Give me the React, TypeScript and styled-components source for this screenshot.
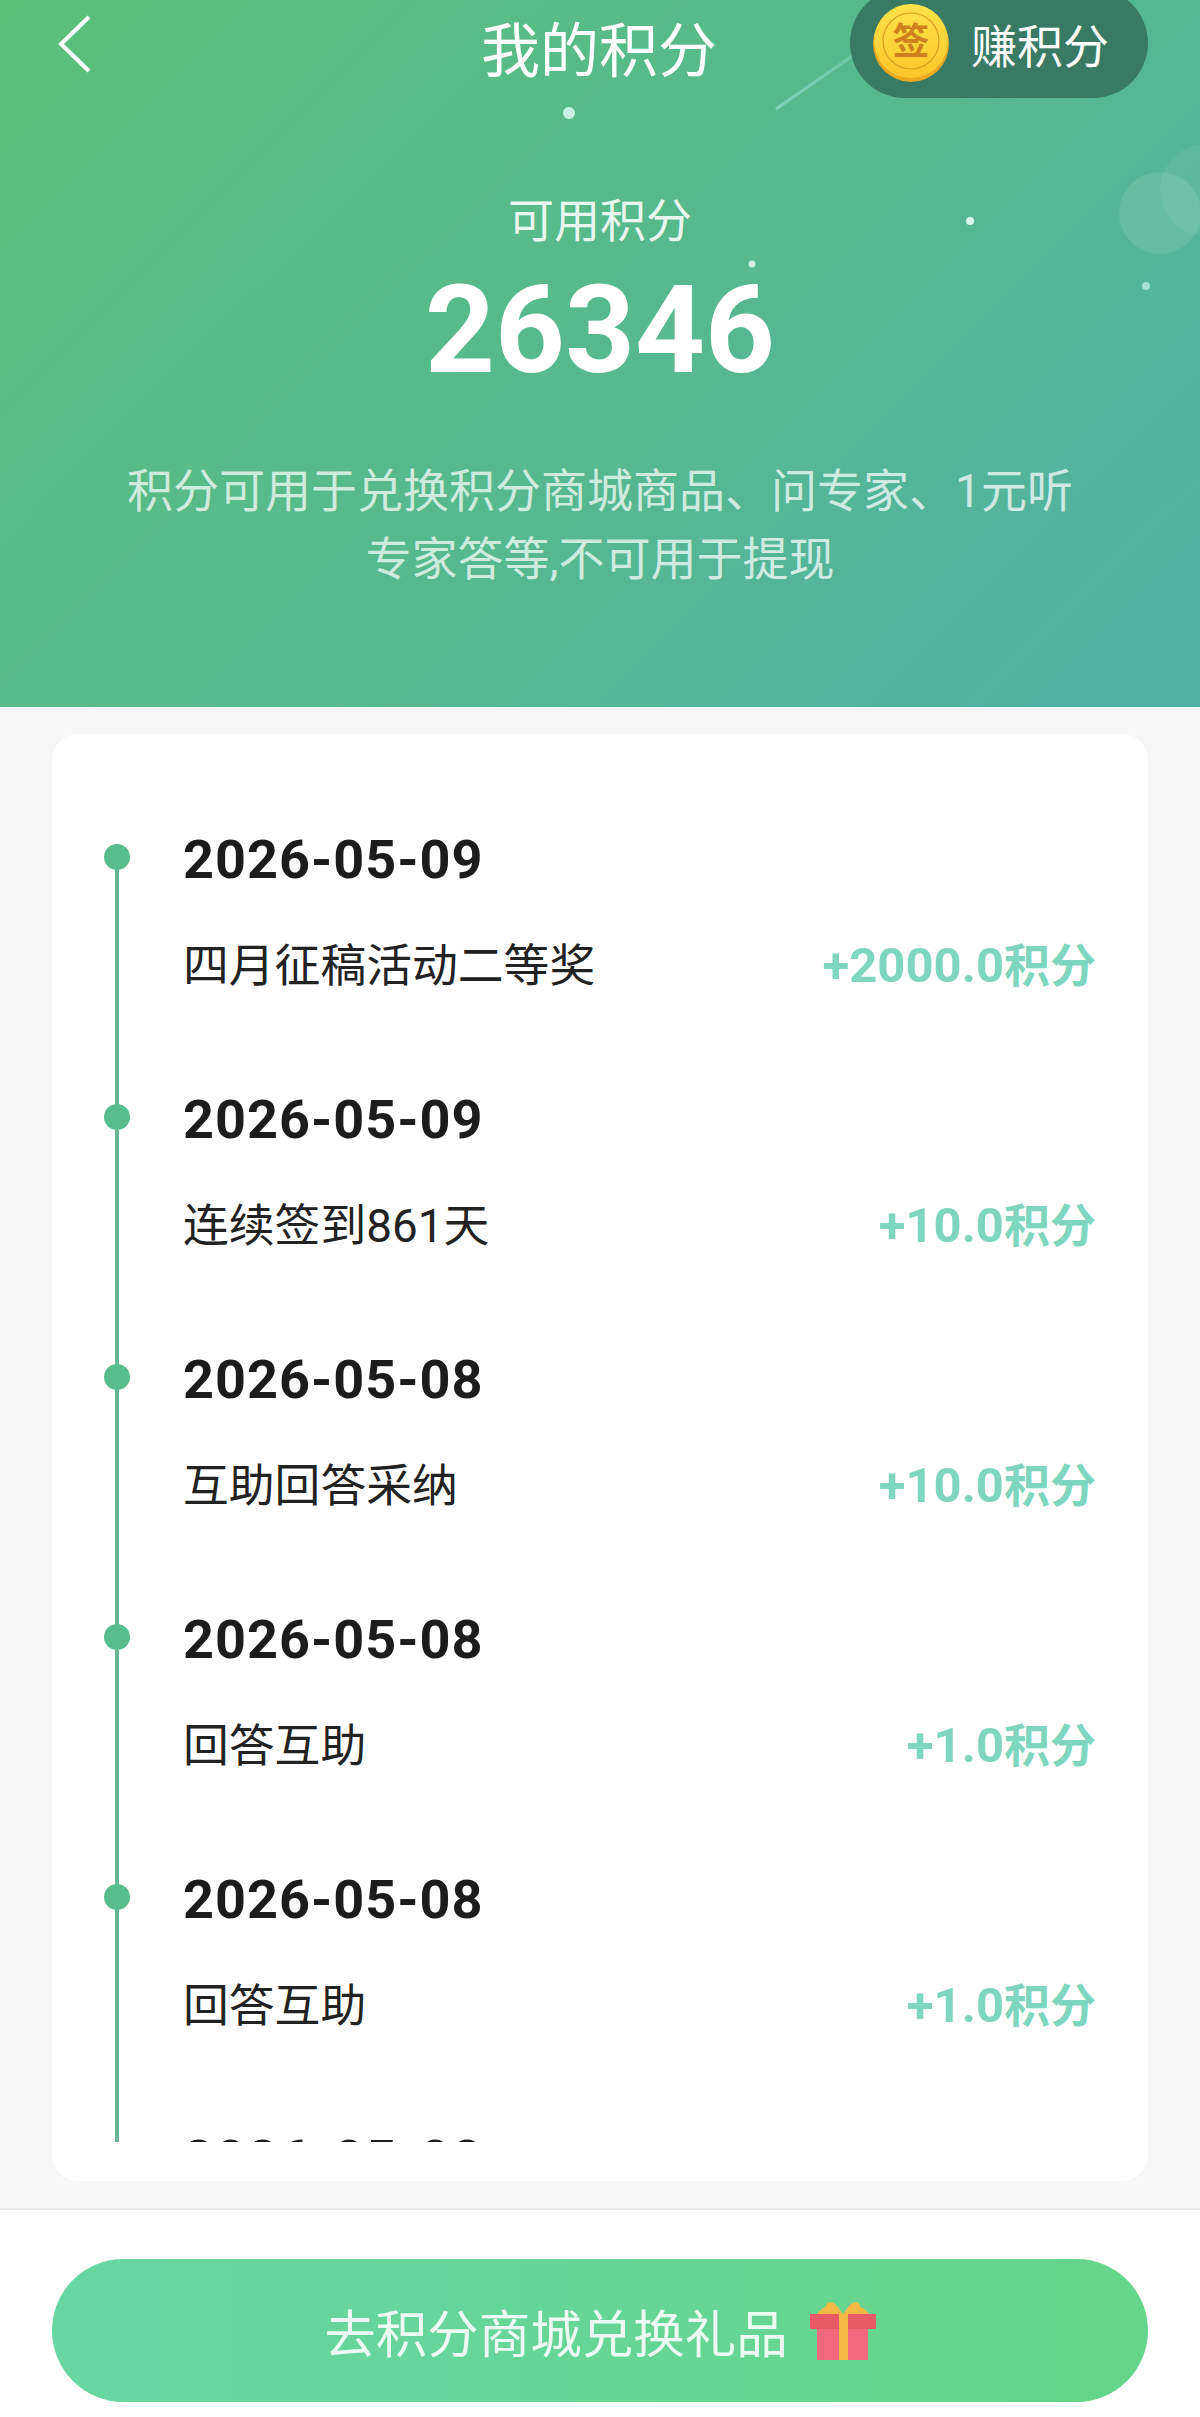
import { createGlobalStyle, styled } from "styled-components"

const GlobalStyle = createGlobalStyle`
    html, body {
        margin: 0;
        padding: 0;
        background: #f7f7f7;
    }

    body {
        font-family: Roboto, "Noto Sans CJK SC", sans-serif;
    }
`

const SPage = styled.div`
    display: flex;
    flex-direction: column;
    width: 1200px;
    height: 2417px;
    overflow: hidden;
`

const SHeader = styled.header`
    position: relative;
    flex: none;
    height: 707px;
    overflow: hidden;
    color: white;
    text-align: center;
    background: linear-gradient(135deg, #5bc07a 0%, #55b892 58%, #51b1a3 100%);
`

const SSky = styled.svg`
    position: absolute;
    top: 0;
    left: 0;
`

const SNav = styled.div`
    position: relative;
    display: grid;
    grid-template-columns: 1fr auto 1fr;
    align-items: start;
    padding: 0 52px;
`

const SBack = styled.svg`
    display: block;
    margin: 15px 0 0 6px;
`

const STitle = styled.h1`
    margin: 0 2px 0 0;
    font-size: 59px;
    font-weight: 400;
    line-height: 104px;
`

const SEarn = styled.div`
    display: flex;
    align-items: center;
    justify-self: end;
    gap: 21px;
    box-sizing: border-box;
    width: 298px;
    height: 110px;
    margin-top: -12px;
    padding-left: 22px;
    border-radius: 55px;
    background: #397a65;
    font-size: 46px;
`

const SSummary = styled.div`
    position: relative;
    padding-top: 89px;
`

const SLabel = styled.div`
    font-size: 46px;
    line-height: 56px;
    color: rgba(255, 255, 255, 0.9);
`

const STotal = styled.div`
    margin-top: 10px;
    font-size: 122px;
    font-weight: 700;
    line-height: 144px;
`

const SNote = styled.p`
    margin: 54px 0 0;
    font-size: 46px;
    line-height: 68px;
    color: rgba(255, 255, 255, 0.72);
`

const SMain = styled.main`
    flex: 1;
    padding: 27px 52px;
    min-height: 0;
`

const SCard = styled.section`
    box-sizing: border-box;
    height: 1447px;
    padding-bottom: 39px;
    border-radius: 26px;
    background: white;
`

const STimeline = styled.ol`
    box-sizing: border-box;
    height: 1408px;
    margin: 0;
    padding: 110px 52px 0;
    overflow: hidden;
    list-style: none;
`

const SItem = styled.li`
    display: grid;
    grid-template-columns: 26px 1fr;
    column-gap: 53px;
    height: 260px;
`

const SRail = styled.div`
    display: flex;
    flex-direction: column;
    align-items: center;
`

const SDot = styled.span`
    flex: none;
    width: 26px;
    height: 26px;
    border-radius: 50%;
    background: #58bd8c;
`

const SLine = styled.span`
    flex: 1;
    width: 3.5px;
    background: #66b694;
`

const SDate = styled.div`
    height: 30px;
    font-size: 54px;
    font-weight: 700;
    line-height: 32px;
    letter-spacing: 1px;
    color: #1c1c1c;
`

const SRow = styled.div`
    display: flex;
    align-items: center;
    justify-content: space-between;
    height: 60px;
    margin-top: 58px;
`

const SReason = styled.span`
    font-size: 45.8px;
    color: #222222;
`

const SAmount = styled.span`
    font-size: 49px;
    font-weight: 700;
    color: #7dd6bd;
`

const SUnit = styled.span`
    font-size: 46px;
`

const SFooter = styled.footer`
    flex: none;
    box-sizing: border-box;
    height: 209px;
    padding: 49px 52px 0;
    border-top: 2px solid #e8e8e8;
    background: white;
`

const SButton = styled.button`
    display: flex;
    align-items: center;
    justify-content: center;
    gap: 22px;
    width: 100%;
    height: 143px;
    padding: 0;
    border: none;
    border-radius: 72px;
    background: linear-gradient(90deg, #67d6a2 0%, #64d58a 100%);
    color: rgba(255, 255, 255, 0.88);
    font-family: inherit;
    font-size: 51.5px;
`

const records = [
    { date: "2026-05-09", reason: "四月征稿活动二等奖", amount: "+2000.0" },
    { date: "2026-05-09", reason: "连续签到861天", amount: "+10.0" },
    { date: "2026-05-08", reason: "互助回答采纳", amount: "+10.0" },
    { date: "2026-05-08", reason: "回答互助", amount: "+1.0" },
    { date: "2026-05-08", reason: "回答互助", amount: "+1.0" },
    { date: "2026-05-08", reason: "回答互助", amount: "+1.0" },
]

const Sky = () => (
    <SSky width="1200" height="707" viewBox="0 0 1200 707">
        <defs>
            <linearGradient id="meteor" x1="0" y1="1" x2="1" y2="0">
                <stop offset="0" stopColor="#8fdcd0" stopOpacity="0.7" />
                <stop offset="1" stopColor="#8fdcd0" stopOpacity="0.1" />
            </linearGradient>
        </defs>
        <path d="M776 109 L950 -12" stroke="url(#meteor)" strokeWidth="3" fill="none" />
        <circle cx="1160" cy="213" r="41" fill="#ffffff" opacity="0.1" />
        <circle cx="1206" cy="190" r="46" fill="#ffffff" opacity="0.06" />
        <circle cx="569" cy="113" r="6" fill="#c9f1e6" />
        <circle cx="970" cy="221" r="4" fill="#d8f6ee" />
        <circle cx="752" cy="264" r="3.5" fill="#c9f1e6" />
        <circle cx="1146" cy="286" r="4" fill="#a5e2d4" />
    </SSky>
)

const BackIcon = () => (
    <SBack width="34" height="58" viewBox="0 0 34 58">
        <path d="M31 2 L3 29 L31 56" stroke="#ffffff" strokeWidth="4" fill="none" />
    </SBack>
)

const CoinIcon = () => (
    <svg width="78" height="78" viewBox="0 0 78 78">
        <defs>
            <linearGradient id="coin" x1="0" y1="0" x2="0" y2="1">
                <stop offset="0" stopColor="#ffe24a" />
                <stop offset="1" stopColor="#fcc62b" />
            </linearGradient>
        </defs>
        <circle cx="39" cy="40" r="38" fill="#eca81f" />
        <circle cx="39" cy="37" r="37" fill="url(#coin)" />
        <circle cx="39" cy="37" r="28" fill="none" stroke="#dc9d24" strokeWidth="1.2" />
        <text x="39" y="51" fontSize="37" fontWeight="700" fill="#cf801c" textAnchor="middle" fontFamily="Noto Sans CJK SC, sans-serif">签</text>
    </svg>
)

const GiftIcon = () => (
    <svg width="66" height="58" viewBox="0 0 66 58">
        <path d="M33 13 C30 7 25 0 20 0 C17 0 16 3 16 5 C12 6 9 9 6 13 Z" fill="#f5b843" />
        <path d="M33 13 C36 7 41 0 46 0 C49 0 50 3 50 5 C54 6 57 9 60 13 Z" fill="#f5b843" />
        <rect x="7" y="27" width="51" height="31" fill="#f2697e" />
        <rect x="0" y="12" width="66" height="15" fill="#e85a65" />
        <rect x="29" y="11" width="9" height="47" fill="#f5b843" />
    </svg>
)

const App = () => (
    <>
        <GlobalStyle />
        <SPage>
            <SHeader>
                <Sky />
                <SNav>
                    <BackIcon />
                    <STitle>我的积分</STitle>
                    <SEarn>
                        <CoinIcon />
                        赚积分
                    </SEarn>
                </SNav>
                <SSummary>
                    <SLabel>可用积分</SLabel>
                    <STotal>26346</STotal>
                    <SNote>
                        积分可用于兑换积分商城商品、问专家、1元听
                        <br />
                        专家答等,不可用于提现
                    </SNote>
                </SSummary>
            </SHeader>
            <SMain>
                <SCard>
                    <STimeline>
                        {records.map((record, index) => (
                            <SItem key={index}>
                                <SRail>
                                    <SDot />
                                    <SLine />
                                </SRail>
                                <div>
                                    <SDate>{record.date}</SDate>
                                    <SRow>
                                        <SReason>{record.reason}</SReason>
                                        <SAmount>
                                            {record.amount}
                                            <SUnit>积分</SUnit>
                                        </SAmount>
                                    </SRow>
                                </div>
                            </SItem>
                        ))}
                    </STimeline>
                </SCard>
            </SMain>
            <SFooter>
                <SButton>
                    去积分商城兑换礼品
                    <GiftIcon />
                </SButton>
            </SFooter>
        </SPage>
    </>
)

export default App
